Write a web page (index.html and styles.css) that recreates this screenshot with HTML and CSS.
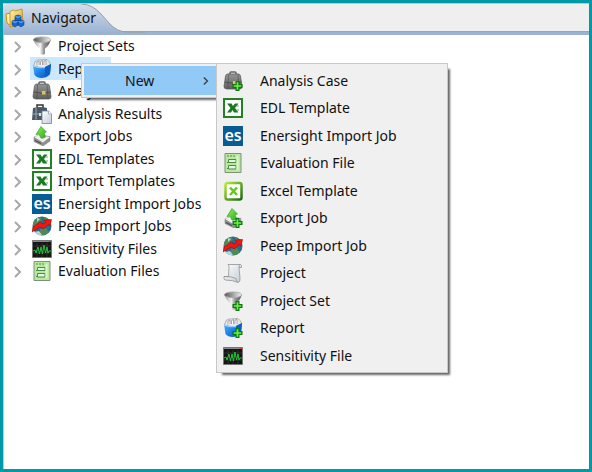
FILE: index.html
```html
<!DOCTYPE html>
<html lang="en">
<head>
<meta charset="utf-8">
<title>Navigator</title>
<link rel="stylesheet" href="styles.css">
</head>
<body>
<svg class="symbols" aria-hidden="true">
  <defs>
    <linearGradient id="silver"><stop offset="0" stop-color="#999"/><stop offset=".4" stop-color="#f4f4f4"/><stop offset=".6" stop-color="#999"/><stop offset="1" stop-color="#555"/></linearGradient>
    <linearGradient id="bowl"><stop offset="0" stop-color="#555"/><stop offset="1" stop-color="#f2f2f2"/></linearGradient>
    <linearGradient id="blue" x2="1" y2="1"><stop offset="0" stop-color="#5bb4ff"/><stop offset=".5" stop-color="#1c7fe8"/><stop offset="1" stop-color="#0a4fa8"/></linearGradient>
    <linearGradient id="leather" x2="0" y2="1"><stop offset="0" stop-color="#949494"/><stop offset="1" stop-color="#606060"/></linearGradient>
    <linearGradient id="paper" x2="1" y2="1"><stop offset="0" stop-color="#fff"/><stop offset="1" stop-color="#c3ccd4"/></linearGradient>
    <linearGradient id="gold" x2="1" y2="1"><stop offset="0" stop-color="#fff3a8"/><stop offset="1" stop-color="#e0a01c"/></linearGradient>
    <linearGradient id="lime" x2="1" y2="1"><stop offset="0" stop-color="#8cf060"/><stop offset="1" stop-color="#2fae1c"/></linearGradient>
    <linearGradient id="rim" x2="1" y2="1"><stop offset="0" stop-color="#b4ea3c"/><stop offset="1" stop-color="#1d6b12"/></linearGradient>
    <linearGradient id="tab-fill" x2="0" y2="1"><stop offset="0" stop-color="#d3deeb"/><stop offset="1" stop-color="#9ab3d3"/></linearGradient>
    <clipPath id="disc"><circle cx="10" cy="10" r="9.500"/></clipPath>
  </defs>
  <symbol id="plus" viewBox="0 0 20 20"><path d="M12.500 10h4v3h3v4h-3v3h-4v-3h-3v-4h3z" fill="#0b7a0b"/><path d="M13.700 11.300h1.600v2.900h2.900v1.600h-2.900v2.900h-1.600v-2.900h-2.900v-1.600h2.900z" fill="#6df04a"/></symbol>
  <symbol id="funnel" viewBox="0 0 20 20"><path d="M1.300 4Q3 9 8 12.500V18q2.500 1.500 5 0v-5.500Q17.500 9 18.700 4z" fill="url(#silver)"/><ellipse cx="10" cy="3.800" rx="8.700" ry="2.900" fill="url(#bowl)" stroke="#aaa" stroke-width=".8"/></symbol>
  <symbol id="report" viewBox="0 0 20 20"><path d="M1.500 7 3 2.500 6 1l9-.5 2 2L19 6l-6 4z" fill="#e8e8e8" stroke="#999" stroke-width=".7"/><path d="M5 6.500V3l2-1v4M8.500 6V2.500l2-1V6M12 6V2l2-.5V6" stroke="#888" stroke-width=".7" fill="#fff"/><path d="M1 6.500q6 2.300 12 1.500l6-3-1 10q-4 4-8.500 4-4.500 0-7-3z" fill="url(#blue)"/><path d="m13 8 6-3-1 10q-2 2.500-5 3.500z" fill="#0e5fc4"/><path d="M1.300 7.200q6 2.300 11.700 1.500" stroke="#a6daff" fill="none"/></symbol>
  <symbol id="case" viewBox="0 0 20 20"><path d="M7 4V2q0-1 1-1h4q1 0 1 1v2" fill="none" stroke="#666" stroke-width="1.500"/><path d="M2.500 5q.5-2 2-2h11q1.500 0 2 2L19 15.500q0 2.500-2 2.500H4q-3 0-3-2.500z" fill="url(#leather)" stroke="#555" stroke-width=".7"/><path d="M5.500 3.500 5 17.500M15 3.500l1 14" stroke="#444" opacity=".5" fill="none"/><path d="M2 11q8 2.500 16.500 0" fill="none" stroke="#4d4d4d"/><path d="M10 10h3.500v3.500H10z" fill="#dfc64c"/></symbol>
  <symbol id="results" viewBox="0 0 20 20"><path d="M5 4V1h6v3" fill="none" stroke="#333" stroke-width="1.500"/><path d="M1 4q7-2 14 0v12H0z" fill="#4b5868"/><path d="M.5 10H15M4 3.500v12" stroke="#9aa8b7"/><path d="M7 9h2v3H7z" fill="#ddd"/><path d="M10 7h6.500l3 3v9.500H10z" fill="url(#paper)" stroke="#6b85a0" stroke-width=".8"/><path d="M16.500 7v3h3" fill="#fff" stroke="#8797aa" stroke-width=".7"/></symbol>
  <symbol id="export" viewBox="0 0 20 20"><path d="m2 11 5-2 11 1.500V15l-7 5-9-4.500z" fill="#8f8f8f" stroke="#777" stroke-width=".5"/><path d="m2 11 5-2 11 2-7 5.500z" fill="#eee"/><path d="m3 14.500 6 3" stroke="#444"/><path d="M9 .5 14.500 6l-2.500.5 1.500 4.500q-2 1.500-4.500 1L7 8l-3 .5z" fill="url(#lime)" stroke="#35a51a" stroke-width=".7"/></symbol>
  <symbol id="excel" viewBox="0 0 20 20"><path d="M1 1h18v18H1z" fill="#fff" stroke="#238023" stroke-width="2"/><path d="M4 5.500h4.500L10 8l2-2.500h3.500L12 10l3.500 4.500H11L9.500 12 8 14.500H4L7.500 10z" fill="#187b20"/><path d="M13.500 8H16M13.500 12H16" stroke="#68aa68"/></symbol>
  <symbol id="excel-new" viewBox="0 0 20 20"><rect x="2.500" y="2" width="16" height="16.500" rx="2" fill="#fff" stroke="url(#rim)" stroke-width="2.500"/><path d="m7 6.500 7 7.500M14 6.500 7 14" stroke="#66c71e" stroke-width="2.500"/></symbol>
  <symbol id="peep" viewBox="0 0 20 20"><g clip-path="url(#disc)"><path d="M0 0h20v20H0z" fill="#286b8b"/><path d="m2 2 6-2 2 4-3 2 1 4-5 2-3-4zM12 0l6 3 2 6-4-1-4-4zM8 13l6-1 3 4-5 4-4-3z" fill="#4e8a58"/><path d="m5 2 3 1-3 3zM12 2l3 1M2 16l5-1 3 4-5 1z" fill="#b8d6d0"/></g><path d="m0 16 1-5 7-5 3 2 3-2-2-2 7.500-.5L18 10l-2-1.500-4.500 4.500L8 11z" fill="#f51414" stroke="#9d0909" stroke-width=".6"/></symbol>
  <symbol id="sensitivity" viewBox="0 0 20 20"><path d="M.5 1.500h19v17H.5z" fill="#151515" stroke="#777"/><path d="M1 2.500h18" stroke="#888"/><path d="M16.500 2.500H19" stroke="#e33"/><path d="M5 4v14M10 4v14M15 4v14M1 7h18M1 14h18" stroke="#4d4d4d" stroke-width=".5"/><path d="m1 12 2-1 1 3 2-6 1.500 7L9 8l1.500 7L12 6l1.500 8L15 8l1 6 1-2h2" fill="none" stroke="#20c832"/></symbol>
  <symbol id="evaluation" viewBox="0 0 20 20"><path d="M2 .5h16v19H2z" fill="#b9e8a0" stroke="#7e927a"/><path d="M4 3h2M7 3h2M10 3h2M4 9.500h4M4 15.500h4" stroke="#499544"/><path d="M5.500 6.500H13v3H5.500zM5.500 12.500H13v3.500H5.500z" fill="#e6fadf" stroke="#4b8c46"/><path d="M14.500 3v14" stroke="#d9f7cc" stroke-width="2"/></symbol>
  <symbol id="project" viewBox="0 0 20 20"><path d="M5 1.500h12.500q1.500.5 1 3H16l1 10.500q.5 4-2 4.500-5-2.500-13-2.500-1.500-1-1-3.500h4.500l.5-9q0-2-1-3z" fill="url(#paper)" stroke="#929292" stroke-width=".8"/><path d="M16 4.500q0-2.500 1.500-3M1 13.500q7-.5 12 2 0 2.500 2 4" fill="none" stroke="#929292" stroke-width=".8"/></symbol>
  <symbol id="navigator" viewBox="0 0 20 20"><path d="m1 6 5-1v13l-4-3z" fill="#fff1a2" stroke="#c58b17"/><path d="M5 3.500 8 2l2 1 7-2 1 15-13 3z" fill="url(#gold)" stroke="#bd8617" stroke-width=".8"/><path d="m10 8 3-1 3 1v4l-3 1-3-1zM7 13l3-1 3 1v4l-3 2-3-2zM13 13l3-1 3 1v4l-3 2-3-2z" fill="#1767ce" stroke="#0a3f8d" stroke-width=".6"/><path d="m10.500 8.500 2.500.8 2.500-.8M7.500 13.500l2.500.8 2.500-.8M13.500 13.500l2.500.8 2.500-.8" fill="none" stroke="#73b7ff"/></symbol>
  <symbol id="chevron" viewBox="0 0 10 14"><path d="m2 2 5 5-5 5" fill="none" stroke="currentColor" stroke-width="2"/></symbol>
</svg>
<main class="view">
  <header class="tabs">
    <svg class="tab-shape" viewBox="0 0 142 29" aria-hidden="true"><path d="M0 29V5Q0 0 5 0h73q11 0 20 10l8 9q8 9 18 9h18v1z" fill="url(#tab-fill)"/><path d="M78 0q11 0 20 10l8 9q8 9 18 9h18" fill="none" stroke="#9b9ea3"/></svg>
    <h1 class="tab"><svg class="icon"><use href="#navigator"/></svg>Navigator</h1>
  </header>
  <ul class="tree">
    <li><button class="expand" aria-label="Expand Project Sets"><svg><use href="#chevron"/></svg></button><span class="node"><svg class="icon"><use href="#funnel"/></svg>Project Sets</span></li>
    <li><button class="expand" aria-label="Expand Reports"><svg><use href="#chevron"/></svg></button><span class="node selected"><svg class="icon"><use href="#report"/></svg>Reports</span></li>
    <li><button class="expand" aria-label="Expand Analysis Cases"><svg><use href="#chevron"/></svg></button><span class="node"><svg class="icon"><use href="#case"/></svg>Analysis Cases</span></li>
    <li><button class="expand" aria-label="Expand Analysis Results"><svg><use href="#chevron"/></svg></button><span class="node"><svg class="icon"><use href="#results"/></svg>Analysis Results</span></li>
    <li><button class="expand" aria-label="Expand Export Jobs"><svg><use href="#chevron"/></svg></button><span class="node"><svg class="icon"><use href="#export"/></svg>Export Jobs</span></li>
    <li><button class="expand" aria-label="Expand EDL Templates"><svg><use href="#chevron"/></svg></button><span class="node"><svg class="icon"><use href="#excel"/></svg>EDL Templates</span></li>
    <li><button class="expand" aria-label="Expand Import Templates"><svg><use href="#chevron"/></svg></button><span class="node"><svg class="icon"><use href="#excel"/></svg>Import Templates</span></li>
    <li><button class="expand" aria-label="Expand Enersight Import Jobs"><svg><use href="#chevron"/></svg></button><span class="node"><span class="icon es-mark" aria-hidden="true">es</span>Enersight Import Jobs</span></li>
    <li><button class="expand" aria-label="Expand Peep Import Jobs"><svg><use href="#chevron"/></svg></button><span class="node"><svg class="icon"><use href="#peep"/></svg>Peep Import Jobs</span></li>
    <li><button class="expand" aria-label="Expand Sensitivity Files"><svg><use href="#chevron"/></svg></button><span class="node"><svg class="icon"><use href="#sensitivity"/></svg>Sensitivity Files</span></li>
    <li><button class="expand" aria-label="Expand Evaluation Files"><svg><use href="#chevron"/></svg></button><span class="node"><svg class="icon"><use href="#evaluation"/></svg>Evaluation Files</span></li>
  </ul>
</main>
<div class="menu context-menu">
  <button class="parent-item">New<svg class="arrow"><use href="#chevron"/></svg></button>
</div>
<div class="menu submenu">
  <button class="item"><svg class="icon"><use href="#case"/><use href="#plus"/></svg>Analysis Case</button>
  <button class="item"><svg class="icon"><use href="#excel"/></svg>EDL Template</button>
  <button class="item"><span class="icon es-mark" aria-hidden="true">es</span>Enersight Import Job</button>
  <button class="item"><svg class="icon"><use href="#evaluation"/></svg>Evaluation File</button>
  <button class="item"><svg class="icon"><use href="#excel-new"/></svg>Excel Template</button>
  <button class="item"><svg class="icon"><use href="#export"/><use href="#plus"/></svg>Export Job</button>
  <button class="item"><svg class="icon"><use href="#peep"/></svg>Peep Import Job</button>
  <button class="item"><svg class="icon"><use href="#project"/></svg>Project</button>
  <button class="item"><svg class="icon"><use href="#funnel"/><use href="#plus"/></svg>Project Set</button>
  <button class="item"><svg class="icon"><use href="#report"/><use href="#plus"/></svg>Report</button>
  <button class="item"><svg class="icon"><use href="#sensitivity"/></svg>Sensitivity File</button>
</div>
</body>
</html>
```
FILE: styles.css
```css
* { box-sizing: border-box; }
body {
  display: flex;
  flex-direction: column;
  margin: 0;
  min-height: 100vh;
  border: 3px solid #0099a8;
  background: #fff;
  color: #111;
  font: 14px/20px "Noto Sans", "Open Sans", sans-serif;
}
button {
  border: 0;
  padding: 0;
  background: none;
  color: inherit;
  font: inherit;
}
.symbols { position: absolute; width: 0; height: 0; }
.icon { display: block; flex: none; width: 20px; height: 20px; }
.es-mark {
  background: #075c94;
  color: #fff;
  font-size: 16px;
  font-weight: 600;
  line-height: 18px;
  text-align: center;
}
.view { display: flex; flex: 1; flex-direction: column; }
.tabs {
  position: relative;
  height: 32px;
  border-top: 1px solid #c4c4c4;
  border-bottom: 3px solid #9ab3d3;
  background: #efefef;
  box-shadow: inset 0 -1px #a3a3a3;
}
.tab-shape { position: absolute; left: 0; top: 0; width: 142px; height: 29px; }
.tab {
  position: relative;
  display: flex;
  align-items: center;
  gap: 6px;
  height: 28px;
  margin: 0;
  padding-left: 2px;
  font: inherit;
}
.tree {
  flex: 1;
  margin: 0;
  padding: 0 0 0 9px;
  border-left: 1px solid #b8cbe3;
  list-style: none;
}
.tree li { display: flex; align-items: center; height: 22px; }
.tree li:nth-child(even) { height: 23px; }
.expand { display: flex; width: 17px; padding-top: 2px; color: #a8a8a8; }
.expand svg { width: 10px; height: 14px; }
.node {
  display: flex;
  align-items: center;
  gap: 6px;
  height: 100%;
  padding: 0 2px;
}
.selected { background: #cce8ff; }
.menu {
  position: absolute;
  border: 1px solid #c8c8c8;
  background: #f0f0f0;
  box-shadow: 4px 4px 2px -2px #0009;
}
.context-menu { left: 81px; top: 63px; width: 140px; padding: 2px; }
.parent-item {
  display: flex;
  align-items: center;
  justify-content: space-between;
  width: 100%;
  height: 29px;
  padding: 0 8px 0 41px;
  background: #91c9f7;
}
.arrow { width: 8px; height: 10px; color: #444; }
.submenu { left: 216px; top: 63px; width: 232px; padding: 3px 6px; }
.item {
  display: flex;
  align-items: center;
  gap: 17px;
  width: 100%;
  height: 27px;
}
.item:nth-child(even) { height: 28px; }
```
